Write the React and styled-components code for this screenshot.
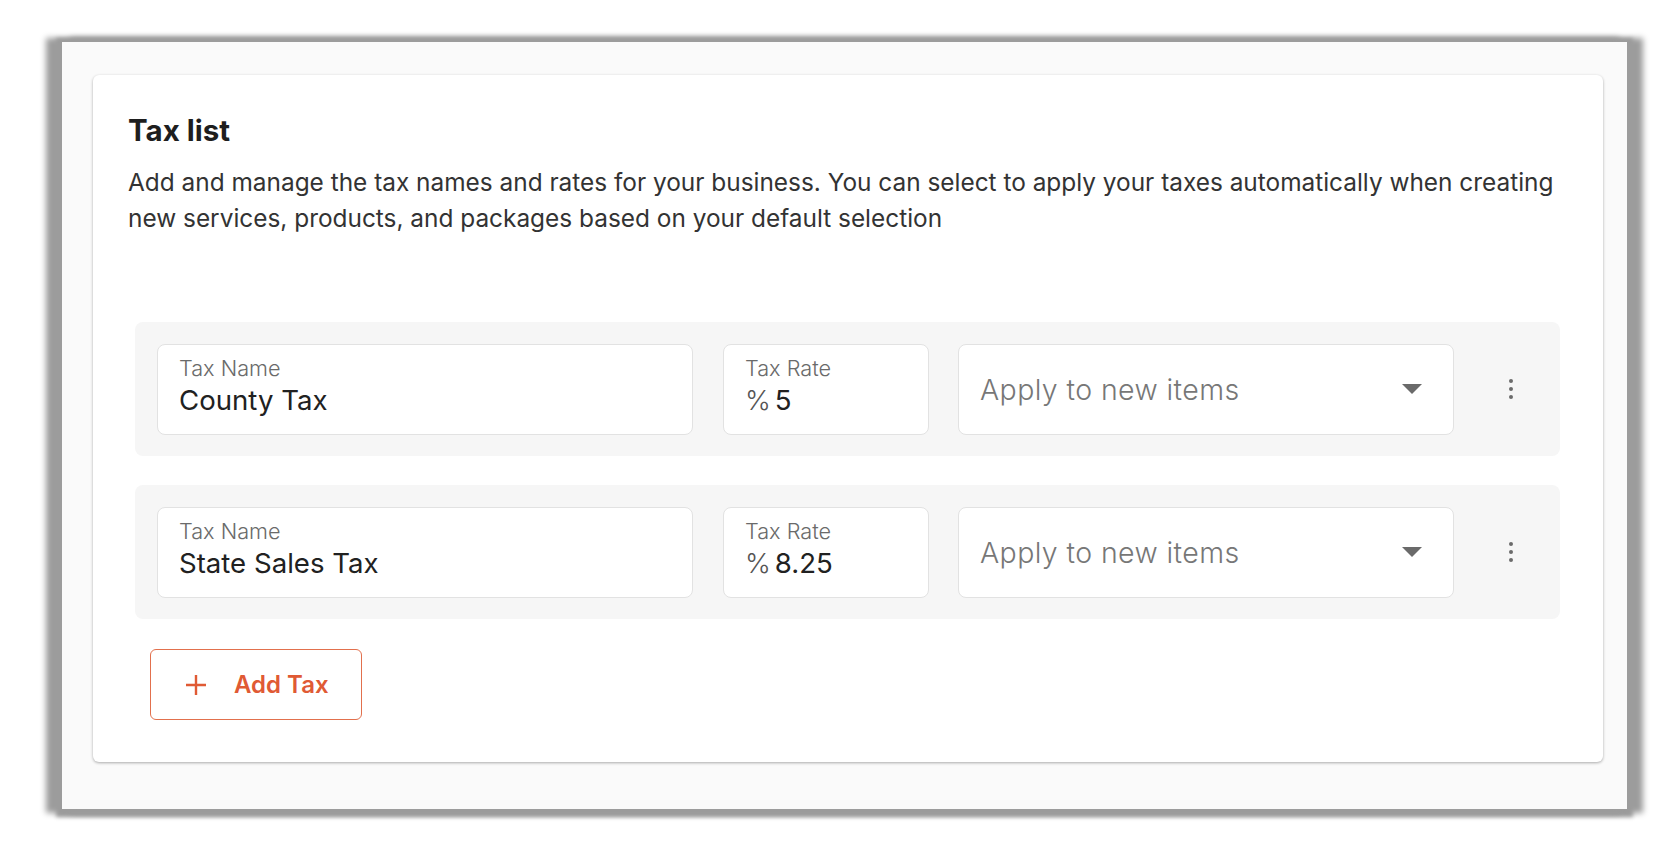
import React from 'react'
import styled, { createGlobalStyle } from 'styled-components'

const GlobalStyle = createGlobalStyle`
  html, body {
    margin: 0;
    padding: 0;
    background: #fff;
  }
  body {
    font-family: Inter, "Noto Sans", sans-serif;
    color: #222;
  }
  * { box-sizing: border-box; }
`

const Page = styled.main`
  min-height: 850px;
  padding: 42px 0 0 62px;
`

const Frame = styled.div`
  width: 1565px;
  height: 767px;
  padding: 33px 24px 0 31px;
  background: #fafafa;
  box-shadow: -12px 0 6px 4px #9c9c9c, 12px 0 6px 4px #9c9c9c, 0 2px 4px 6px #9c9c9c;
`

const Card = styled.section`
  width: 1510px;
  height: 687px;
  background: #fff;
  border-radius: 6px;
  box-shadow: 0 1px 3px rgba(0, 0, 0, 0.32);
  padding: 38px 43px 0 35px;
`

const Title = styled.h2`
  margin: 0;
  font-size: 29.5px;
  line-height: 34px;
  font-weight: 700;
  color: #1e1e1e;
`

const Description = styled.p`
  margin: 17px 0 0;
  font-size: 24.4px;
  line-height: 36px;
  font-weight: 400;
  color: #333;
`

const Rows = styled.div`
  margin: 86px 0 0 7px;
  display: flex;
  flex-direction: column;
  gap: 29px;
`

const Row = styled.div`
  display: flex;
  align-items: center;
  height: 134px;
  padding: 0 0 0 22px;
  background: #f6f6f6;
  border-radius: 8px;
`

const Field = styled.div`
  width: ${p => p.$width}px;
  margin-right: ${p => p.$gap || 0}px;
  height: 91px;
  background: #fff;
  border: 1px solid #e2e2e2;
  border-radius: 8px;
  padding: 10px 0 0 21px;
  display: flex;
  flex-direction: column;
`

const Label = styled.span`
  font-size: 21.7px;
  line-height: 26px;
  font-weight: 300;
  color: #6a6a6a;
`

const Value = styled.span`
  margin-top: 2px;
  font-size: 27.6px;
  line-height: 34px;
  font-weight: 400;
  color: #212121;
`

const Percent = styled.span`
  font-weight: 300;
  color: #555;
  margin-right: 4px;
`

const Select = styled.div`
  width: 496px;
  height: 91px;
  background: #fff;
  border: 1px solid #e2e2e2;
  border-radius: 8px;
  padding: 0 31px 0 21px;
  display: flex;
  align-items: center;
  justify-content: space-between;
`

const Placeholder = styled.span`
  font-size: 28.5px;
  letter-spacing: 0.4px;
  font-weight: 300;
  color: #777;
`

const MoreButton = styled.button`
  margin-left: 47px;
  width: 20px;
  height: 28px;
  padding: 0;
  border: 0;
  background: transparent;
  display: flex;
  flex-direction: column;
  align-items: center;
  justify-content: center;
  gap: 3.5px;
`

const Dot = styled.span`
  width: 4.5px;
  height: 4.5px;
  border-radius: 50%;
  background: #6b6b6b;
`

const AddButton = styled.button`
  margin: 30px 0 0 22px;
  width: 212px;
  height: 71px;
  padding: 0 0 0 34px;
  display: flex;
  align-items: center;
  gap: 27px;
  background: #fff;
  border: 1px solid #e2704d;
  border-radius: 6px;
  font-family: Inter, "Noto Sans", sans-serif;
  font-size: 24px;
  font-weight: 600;
  color: #e05a34;
  cursor: pointer;
`

const Caret = () => (
  <svg width="20" height="10" viewBox="0 0 20 10">
    <polygon points="0,0 20,0 10,10" fill="#6a6a6a" />
  </svg>
)

const Plus = () => (
  <svg width="22" height="22" viewBox="0 0 22 22">
    <path d="M11 1v20M1 11h20" stroke="#e05a34" strokeWidth="2.4" fill="none" />
  </svg>
)

const taxes = [
  { name: 'County Tax', rate: '5' },
  { name: 'State Sales Tax', rate: '8.25' },
]

const TaxRow = ({ name, rate }) => (
  <Row>
    <Field $width={536} $gap={30}>
      <Label>Tax Name</Label>
      <Value>{name}</Value>
    </Field>
    <Field $width={206} $gap={29}>
      <Label>Tax Rate</Label>
      <Value>
        <Percent>%</Percent>{rate}
      </Value>
    </Field>
    <Select>
      <Placeholder>Apply to new items</Placeholder>
      <Caret />
    </Select>
    <MoreButton aria-label="More">
      <Dot />
      <Dot />
      <Dot />
    </MoreButton>
  </Row>
)

export default function App() {
  return (
    <>
      <GlobalStyle />
      <Page>
        <Frame>
          <Card>
            <Title>Tax list</Title>
            <Description>
              Add and manage the tax names and rates for your business. You can select to apply your taxes
              automatically when creating new services, products, and packages based on your default selection
            </Description>
            <Rows>
              {taxes.map(t => (
                <TaxRow key={t.name} {...t} />
              ))}
            </Rows>
            <AddButton>
              <Plus />
              Add Tax
            </AddButton>
          </Card>
        </Frame>
      </Page>
    </>
  )
}
